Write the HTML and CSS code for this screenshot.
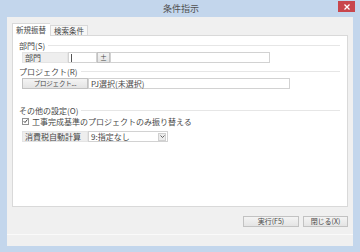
FILE: index.html
```html
<!DOCTYPE html>
<html lang="ja">
<head>
<meta charset="utf-8">
<title>条件指示</title>
<link rel="stylesheet" href="styles.css">
</head>
<body>
<div class="window">
  <div class="titlebar">
    <span class="title">条件指示</span>
    <div class="close"><svg width="6" height="6" viewBox="0 0 6 6"><path d="M0.5 0.5L5.5 5.5M5.5 0.5L0.5 5.5" stroke="#fff" stroke-width="1.3"/></svg></div>
  </div>
  <div class="client">
    <div class="tabs">
      <div class="tab active">新規振替</div>
      <div class="tab">検索条件</div>
    </div>
    <div class="panel">
      <div class="group-title first">部門(S)</div>
      <div class="row">
        <div class="cell w46">部門</div>
        <div class="input w29"><span class="caret"></span></div>
        <div class="btn small w13">±</div>
        <div class="input w160"></div>
      </div>
      <div class="group-title">プロジェクト(R)</div>
      <div class="row">
        <div class="btn pj w66">プロジェクト...</div>
        <div class="input w202">PJ選択(未選択)</div>
      </div>
      <div class="group-title gap">その他の設定(O)</div>
      <div class="check-row">
        <span class="checkbox"><svg width="6" height="6" viewBox="0 0 6 6"><path d="M0.8 3.2L2.4 4.8L5.3 1.2" fill="none" stroke="#333" stroke-width="1.1"/></svg></span>
        <span>工事完成基準のプロジェクトのみ振り替える</span>
      </div>
      <div class="row row3">
        <div class="cell w66">消費税自動計算</div>
        <div class="select w80"><span class="sel-text">9:指定なし</span><span class="arrow"><svg width="5" height="3" viewBox="0 0 5 3"><path d="M0.5 0.5L2.5 2.5L4.5 0.5" fill="none" stroke="#555" stroke-width="0.9"/></svg></span></div>
      </div>
    </div>
    <div class="footer">
      <div class="btn action w56">実行(F5)</div>
      <div class="btn action w45">閉じる(X)</div>
    </div>
    <div class="status"></div>
  </div>
</div>
</body>
</html>
```

FILE: styles.css
```css
* { box-sizing: border-box; }
body {
  margin: 0;
  width: 360px;
  height: 252px;
  overflow: hidden;
  font-family: "Noto Sans CJK JP", "Noto Sans", sans-serif;
  font-size: 8px;
  color: #484848;
}
.window {
  position: relative;
  width: 360px;
  height: 252px;
  background: #c3d6ec;
  display: flex;
  flex-direction: column;
  padding: 0 7px 6px;
}
.titlebar {
  height: 17px;
  display: flex;
  align-items: center;
  justify-content: center;
  font-size: 9px;
  color: #505050;
  padding-left: 2px;
}
.close {
  position: absolute;
  top: 1px;
  right: 5px;
  width: 17px;
  height: 11px;
  background: #c8464c;
  display: flex;
  align-items: center;
  justify-content: center;
}
.client {
  flex: 1;
  background: #f0f0f0;
  display: flex;
  flex-direction: column;
  padding: 6px 5px 0;
}
.tabs {
  display: flex;
  align-items: flex-end;
  height: 12px;
}
.tab {
  height: 10px;
  padding: 0 3px;
  border: 1px solid #d9d9d9;
  border-bottom: none;
  background: #f7f7f7;
  line-height: 9px;
  font-size: 7.5px;
}
.tab.active {
  height: 13px;
  margin-bottom: -1px;
  background: #fff;
  position: relative;
  z-index: 1;
  border-right: none;
  padding: 1px 3px 0;
  width: 38px;
}
.panel {
  height: 172px;
  background: #fff;
  border: 1px solid #d9d9d9;
  padding: 4px 7px 0 6px;
  display: flex;
  flex-direction: column;
}
.group-title {
  display: flex;
  align-items: center;
  height: 10px;
  gap: 3px;
  margin-top: 3px;
  white-space: nowrap;
}
.group-title.first { margin-top: 0; }
.group-title.gap { margin-top: 16px; }
.group-title::after {
  content: "";
  flex: 1;
  height: 1px;
  background: #e6e6e6;
}
.row {
  display: flex;
  height: 11px;
  margin: 2px 0 0 3px;
}
.row3 { margin-top: 5px; }
.cell {
  background: #eeeeee;
  border: 1px solid #e4e4e4;
  line-height: 9px;
  padding-left: 2px;
  white-space: nowrap;
}
.input {
  background: #fff;
  border: 1px solid #d2d2d2;
  line-height: 9px;
  padding-left: 2px;
  white-space: nowrap;
  display: flex;
  align-items: center;
}
.caret {
  width: 1px;
  height: 8px;
  background: #555;
}
.btn {
  background: linear-gradient(#f4f4f4, #e4e4e4);
  border: 1px solid #c2c2c2;
  display: flex;
  align-items: center;
  justify-content: center;
  white-space: nowrap;
  line-height: 9px;
}
.btn.small { font-size: 7px; }
.btn.pj { font-size: 6.5px; letter-spacing: -0.2px; }
.check-row {
  display: flex;
  align-items: center;
  height: 10px;
  margin: 1px 0 0 3px;
  gap: 3px;
  white-space: nowrap;
}
.checkbox {
  width: 7px;
  height: 7px;
  border: 1px solid #929292;
  background: #fff;
  display: flex;
  align-items: center;
  justify-content: center;
}
.select {
  background: #fff;
  border: 1px solid #d2d2d2;
  display: flex;
  align-items: center;
  justify-content: space-between;
  padding: 0 1px 0 2px;
  line-height: 9px;
}
.arrow {
  width: 8px;
  height: 8px;
  background: #ececec;
  border: 1px solid #d0d0d0;
  display: flex;
  align-items: center;
  justify-content: center;
}
.footer {
  display: flex;
  justify-content: flex-end;
  gap: 4px;
  margin-top: 9px;
  height: 11px;
}
.btn.action { font-size: 7px; }
.status {
  margin-top: 7px;
  margin-left: -5px;
  margin-right: -5px;
  height: 1px;
  background: #e0e0e0;
  border-bottom: 1px solid #fafafa;
}
.w13 { width: 13px; }
.w29 { width: 29px; }
.w45 { width: 45px; }
.w46 { width: 46px; }
.w56 { width: 56px; }
.w66 { width: 66px; }
.w80 { width: 80px; }
.w160 { width: 160px; }
.w202 { width: 202px; }
```
